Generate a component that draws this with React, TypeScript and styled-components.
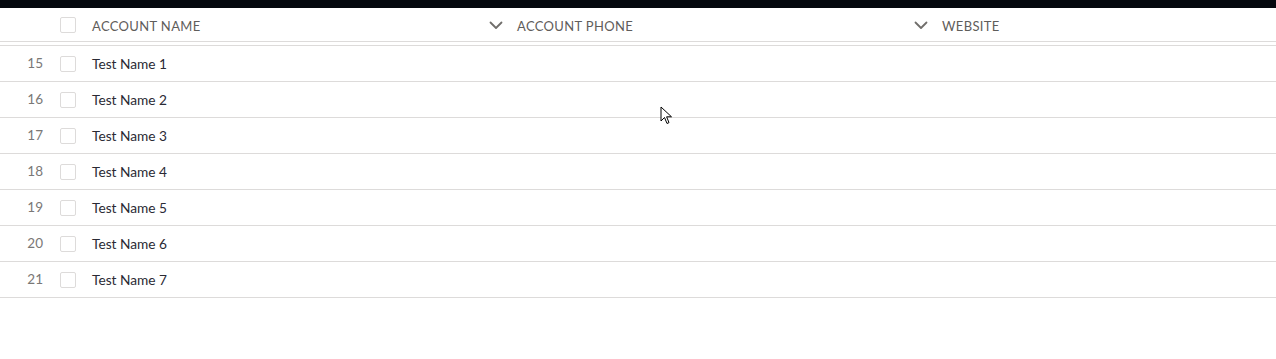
import React from "react";
import styled, { createGlobalStyle } from "styled-components";

const GlobalStyle = createGlobalStyle`
  html, body {
    margin: 0;
    padding: 0;
    background: #ffffff;
    font-family: Lato, "Noto Sans", "Liberation Sans", sans-serif;
  }
`;

const Page = styled.div`
  position: relative;
  width: 1276px;
  height: 359px;
  overflow: hidden;
  background: #ffffff;
`;

const TopBar = styled.div`
  height: 8px;
  background: #05080e;
`;

const COLS = "52px 32px 425px 425px 1fr";

const HeaderRow = styled.div`
  display: grid;
  grid-template-columns: ${COLS};
  height: 33px;
  align-items: center;
  border-bottom: 1px solid #dddbda;
  margin-bottom: 3px;
`;

const Body = styled.div`
  border-top: 1px solid #dddbda;
`;

const Row = styled.div`
  display: grid;
  grid-template-columns: ${COLS};
  height: 35px;
  align-items: center;
  border-bottom: 1px solid #dddbda;
`;

const NumCell = styled.div`
  text-align: right;
  padding-right: 9px;
  font-size: 13.5px;
  line-height: 1;
  color: #7a7876;
`;

const CheckCell = styled.div`
  padding-left: 8px;
  display: flex;
  align-items: center;
`;

const Checkbox = styled.span`
  display: block;
  width: 14px;
  height: 14px;
  border: 1px solid #dddbda;
  border-radius: 2px;
  background: #fff;
`;

const HeadCell = styled.div`
  display: flex;
  align-items: center;
  justify-content: space-between;
  padding: 2px 6px 0 8px;
  font-size: 13px;
  line-height: 1;
  letter-spacing: 0.35px;
  color: #5f5d5b;
  text-transform: uppercase;
`;

const HeadLabel = styled.span`
  padding-top: 1px;
`;

const Cell = styled.div`
  padding-left: 8px;
  font-size: 13.7px;
  line-height: 1;
  color: #2a2a34;
`;

const Chevron = () => (
  <svg width="14" height="9" viewBox="0 0 14 9" fill="none">
    <path d="M1.5 1.5 L7 7 L12.5 1.5" stroke="#706e6b" strokeWidth="1.8" strokeLinecap="round" strokeLinejoin="round" />
  </svg>
);

const Cursor = styled.svg`
  position: absolute;
  left: 660px;
  top: 106px;
`;

const rows = [15, 16, 17, 18, 19, 20, 21];

export default function App() {
  return (
    <Page>
      <GlobalStyle />
      <TopBar />
      <HeaderRow>
        <NumCell />
        <CheckCell>
          <Checkbox />
        </CheckCell>
        <HeadCell>
          <HeadLabel>Account Name</HeadLabel>
          <Chevron />
        </HeadCell>
        <HeadCell>
          <HeadLabel>Account Phone</HeadLabel>
          <Chevron />
        </HeadCell>
        <HeadCell>
          <HeadLabel>Website</HeadLabel>
        </HeadCell>
      </HeaderRow>
      <Body>
        {rows.map((n, i) => (
          <Row key={n}>
            <NumCell>{n}</NumCell>
            <CheckCell>
              <Checkbox />
            </CheckCell>
            <Cell>Test Name {i + 1}</Cell>
            <Cell />
            <Cell />
          </Row>
        ))}
      </Body>
      <Cursor width="14" height="20" viewBox="0 0 14 20">
        <path d="M1 1 L1 15 L4.5 11.5 L7 17.5 L9 16.6 L6.6 10.8 L11.5 10.8 Z" fill="#fff" stroke="#000" strokeWidth="1" strokeLinejoin="round" />
      </Cursor>
    </Page>
  );
}
